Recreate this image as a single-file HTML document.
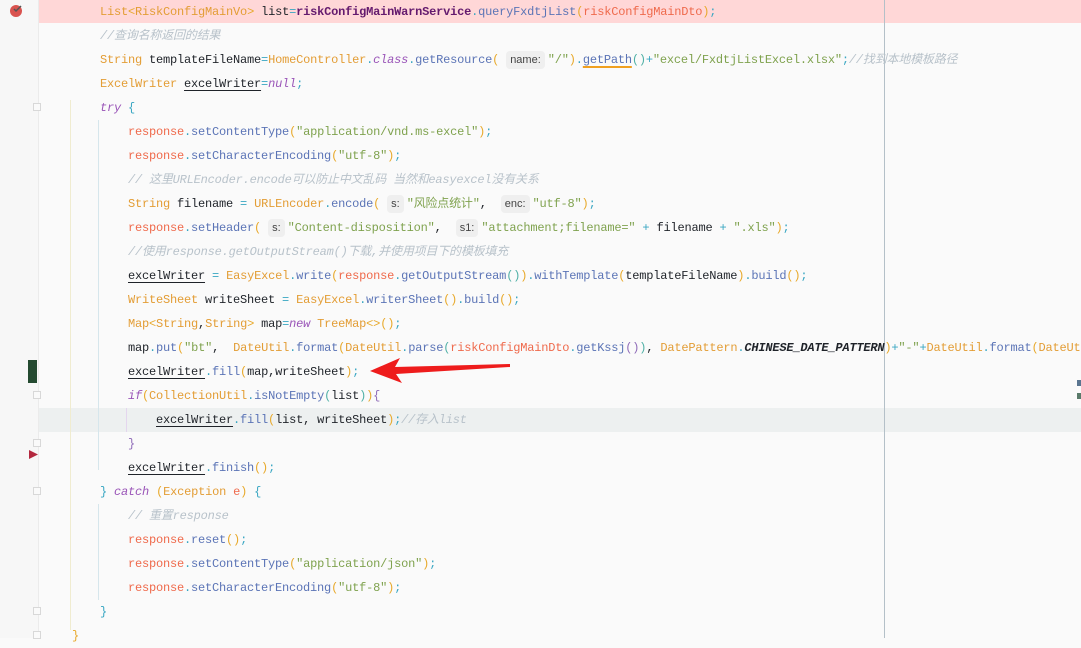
<!DOCTYPE html>
<html><head><meta charset="utf-8">
<style>
html,body{margin:0;padding:0;}
body{width:1081px;height:638px;overflow:hidden;background:#fafafa;position:relative;font-family:"Liberation Mono","Noto Sans CJK SC",monospace;font-size:12px;letter-spacing:-0.2px;color:#1f2329;}
.gut{position:absolute;left:0;top:0;width:38px;height:638px;background:#f7f7f7;border-right:1px solid #ebebeb;}
.ln{position:absolute;height:24px;line-height:24px;white-space:pre;}
.t{color:#e39d35}.m{color:#5b74b6}.v{color:#ef6a4c}.s{color:#7fa24e}.k{color:#9a55b8;font-style:italic}.c{color:#b8c2ca;font-style:italic}
.o{color:#38a6c2}.p1{color:#e8a92b}.p2{color:#4fb0a6}.p3{color:#8f6bb8}.u{text-decoration:underline;text-underline-offset:3px}
.b{font-weight:bold;color:#641a6e}
.h{display:inline-block;background:#efefef;border-radius:4px;font-family:"Liberation Sans",sans-serif;font-size:11px;letter-spacing:0;color:#444;padding:0 4px;line-height:18px;margin-right:3px;}
.vl{position:absolute;width:1px;}
.fold{position:absolute;left:33px;width:8px;height:8px;border:1px solid #d8d8d8;background:#fafafa;box-sizing:border-box;}
</style></head><body>
<div class="gut"></div>
<div style="position:absolute;left:39px;top:0;width:1042px;height:23px;background:#ffd7d7"></div>
<div style="position:absolute;left:39px;top:408px;width:1042px;height:24px;background:#edf0f0"></div>
<div class="vl" style="left:884px;top:0;height:638px;background:#b4c0c8"></div>
<div class="vl" style="left:70px;top:100px;height:530px;background:#f0ecd0"></div>
<div class="vl" style="left:98px;top:120px;height:350px;background:#d6e6ec"></div>
<div class="vl" style="left:98px;top:504px;height:96px;background:#d6e6ec"></div>
<div class="vl" style="left:126px;top:408px;height:24px;background:#e4d6ee"></div>
<div class="fold" style="top:103px"></div><div class="fold" style="top:391px"></div><div class="fold" style="top:439px"></div>
<div class="fold" style="top:487px"></div><div class="fold" style="top:607px"></div><div class="fold" style="top:631px"></div>
<svg style="position:absolute;left:8px;top:2px" width="18" height="16"><circle cx="8" cy="9" r="6" fill="#d9534f"/><path d="M6 7l2 2 5-5" stroke="#555" stroke-width="1.5" fill="none"/></svg>
<div style="position:absolute;left:28px;top:360px;width:9px;height:23px;background:#244a30"></div>
<svg style="position:absolute;left:29px;top:450px" width="10" height="10"><polygon points="0,0 9,4.5 0,9" fill="#b3283e"/></svg>
<div style="position:absolute;left:1077px;top:380px;width:4px;height:6px;background:#5a7590"></div>
<div style="position:absolute;left:1077px;top:393px;width:4px;height:6px;background:#5a7a6a"></div>

<div class="ln" style="top:0;left:100px"><span class="t">List</span><span class="p1">&lt;</span><span class="t">RiskConfigMainVo</span><span class="p1">&gt;</span> list<span class="o">=</span><span class="b">riskConfigMainWarnService</span><span class="o">.</span><span class="m">queryFxdtjList</span><span class="p1">(</span><span class="v">riskConfigMainDto</span><span class="p1">)</span><span class="o">;</span></div>
<div class="ln c" style="top:24px;left:100px">//查询名称返回的结果</div>
<div class="ln" style="top:48px;left:100px"><span class="t">String</span> templateFileName<span class="o">=</span><span class="t">HomeController</span><span class="o">.</span><span class="k">class</span><span class="o">.</span><span class="m">getResource</span><span class="p1">(</span> <span class="h">name:</span><span class="s">"/"</span><span class="p1">)</span><span class="o">.</span><span class="m" style="text-decoration:underline #f0a020 2px;text-underline-offset:3px">getPath</span><span class="p2">()</span><span class="o">+</span><span class="s">"excel/FxdtjListExcel.xlsx"</span><span class="o">;</span><span class="c">//找到本地模板路径</span></div>
<div class="ln" style="top:72px;left:100px"><span class="t">ExcelWriter</span> <span class="u">excelWriter</span><span class="o">=</span><span class="k">null</span><span class="o">;</span></div>
<div class="ln" style="top:96px;left:100px"><span class="k">try</span> <span class="o">{</span></div>
<div class="ln" style="top:120px;left:128px"><span class="v">response</span><span class="o">.</span><span class="m">setContentType</span><span class="p1">(</span><span class="s">"application/vnd.ms-excel"</span><span class="p1">)</span><span class="o">;</span></div>
<div class="ln" style="top:144px;left:128px"><span class="v">response</span><span class="o">.</span><span class="m">setCharacterEncoding</span><span class="p1">(</span><span class="s">"utf-8"</span><span class="p1">)</span><span class="o">;</span></div>
<div class="ln c" style="top:168px;left:128px">// 这里URLEncoder.encode可以防止中文乱码 当然和easyexcel没有关系</div>
<div class="ln" style="top:192px;left:128px"><span class="t">String</span> filename <span class="o">=</span> <span class="t">URLEncoder</span><span class="o">.</span><span class="m">encode</span><span class="p1">(</span> <span class="h">s:</span><span class="s">"风险点统计"</span>,  <span class="h">enc:</span><span class="s">"utf-8"</span><span class="p1">)</span><span class="o">;</span></div>
<div class="ln" style="top:216px;left:128px"><span class="v">response</span><span class="o">.</span><span class="m">setHeader</span><span class="p1">(</span> <span class="h">s:</span><span class="s">"Content-disposition"</span>,  <span class="h">s1:</span><span class="s">"attachment;filename="</span> <span class="o">+</span> filename <span class="o">+</span> <span class="s">".xls"</span><span class="p1">)</span><span class="o">;</span></div>
<div class="ln c" style="top:240px;left:128px">//使用response.getOutputStream()下载,并使用项目下的模板填充</div>
<div class="ln" style="top:264px;left:128px"><span class="u">excelWriter</span> <span class="o">=</span> <span class="t">EasyExcel</span><span class="o">.</span><span class="m">write</span><span class="p1">(</span><span class="v">response</span><span class="o">.</span><span class="m">getOutputStream</span><span class="p2">()</span><span class="p1">)</span><span class="o">.</span><span class="m">withTemplate</span><span class="p1">(</span>templateFileName<span class="p1">)</span><span class="o">.</span><span class="m">build</span><span class="p1">()</span><span class="o">;</span></div>
<div class="ln" style="top:288px;left:128px"><span class="t">WriteSheet</span> writeSheet <span class="o">=</span> <span class="t">EasyExcel</span><span class="o">.</span><span class="m">writerSheet</span><span class="p1">()</span><span class="o">.</span><span class="m">build</span><span class="p1">()</span><span class="o">;</span></div>
<div class="ln" style="top:312px;left:128px"><span class="t">Map</span><span class="p1">&lt;</span><span class="t">String</span>,<span class="t">String</span><span class="p1">&gt;</span> map<span class="o">=</span><span class="k">new</span> <span class="t">TreeMap</span><span class="p1">&lt;&gt;</span><span class="p1">()</span><span class="o">;</span></div>
<div class="ln" style="top:336px;left:128px">map<span class="o">.</span><span class="m">put</span><span class="p1">(</span><span class="s">"bt"</span>,  <span class="t">DateUtil</span><span class="o">.</span><span class="m">format</span><span class="p1">(</span><span class="t">DateUtil</span><span class="o">.</span><span class="m">parse</span><span class="p2">(</span><span class="v">riskConfigMainDto</span><span class="o">.</span><span class="m">getKssj</span><span class="p3">()</span><span class="p2">)</span>, <span class="t">DatePattern</span><span class="o">.</span><span style="font-weight:bold;font-style:italic">CHINESE_DATE_PATTERN</span><span class="p1">)</span><span class="o">+</span><span class="s">"-"</span><span class="o">+</span><span class="t">DateUtil</span><span class="o">.</span><span class="m">format</span><span class="p1">(</span><span class="t">DateUt</span></div>
<div class="ln" style="top:360px;left:128px"><span class="u">excelWriter</span><span class="o">.</span><span class="m">fill</span><span class="p1">(</span>map,writeSheet<span class="p1">)</span><span class="o">;</span></div>
<div class="ln" style="top:384px;left:128px"><span class="k">if</span><span class="p1">(</span><span class="t">CollectionUtil</span><span class="o">.</span><span class="m">isNotEmpty</span><span class="p2">(</span>list<span class="p2">)</span><span class="p1">)</span><span class="p3">{</span></div>
<div class="ln" style="top:408px;left:156px"><span class="u">excelWriter</span><span class="o">.</span><span class="m">fill</span><span class="p1">(</span>list, writeSheet<span class="p1">)</span><span class="o">;</span><span class="c">//存入list</span></div>
<div class="ln" style="top:432px;left:128px"><span class="p3">}</span></div>
<div class="ln" style="top:456px;left:128px"><span class="u">excelWriter</span><span class="o">.</span><span class="m">finish</span><span class="p1">()</span><span class="o">;</span></div>
<div class="ln" style="top:480px;left:100px"><span class="o">}</span> <span class="k">catch</span> <span class="p1">(</span><span class="t">Exception</span> <span class="v">e</span><span class="p1">)</span> <span class="o">{</span></div>
<div class="ln c" style="top:504px;left:128px">// 重置response</div>
<div class="ln" style="top:528px;left:128px"><span class="v">response</span><span class="o">.</span><span class="m">reset</span><span class="p1">()</span><span class="o">;</span></div>
<div class="ln" style="top:552px;left:128px"><span class="v">response</span><span class="o">.</span><span class="m">setContentType</span><span class="p1">(</span><span class="s">"application/json"</span><span class="p1">)</span><span class="o">;</span></div>
<div class="ln" style="top:576px;left:128px"><span class="v">response</span><span class="o">.</span><span class="m">setCharacterEncoding</span><span class="p1">(</span><span class="s">"utf-8"</span><span class="p1">)</span><span class="o">;</span></div>
<div class="ln" style="top:600px;left:100px"><span class="o">}</span></div>
<div class="ln" style="top:624px;left:72px"><span class="p1">}</span></div>

<svg style="position:absolute;left:360px;top:355px" width="155" height="30"><polygon points="10,16 40,3 35,12 150,9 150,12 36,19 42,28" fill="#ee1c1c"/></svg>
</body></html>
